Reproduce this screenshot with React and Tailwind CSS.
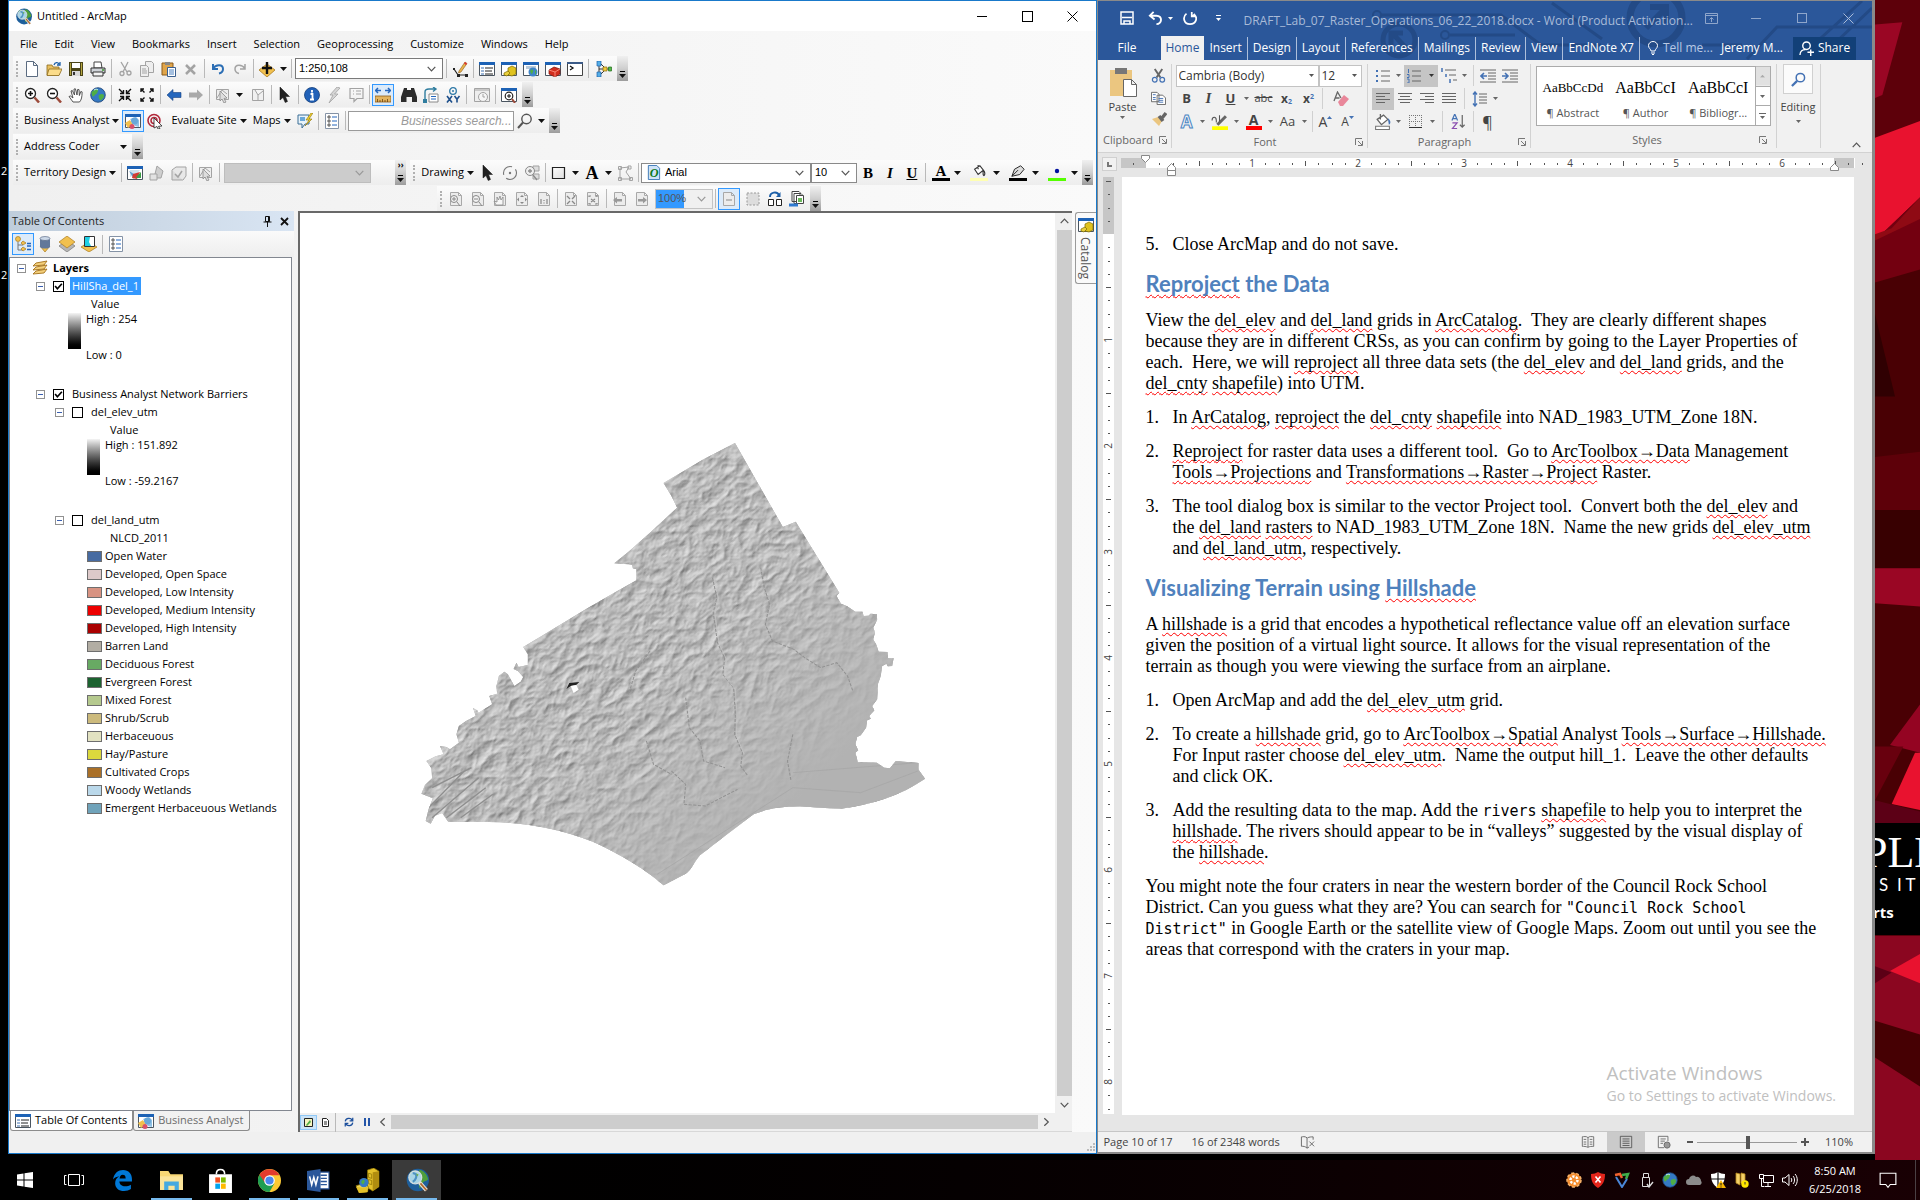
import React from "react";

/* ---------- drawing helpers ---------- */
function S({ w = 16, h, vb = "0 0 16 16", children }) {
  return (
    <svg width={w} height={h || w} viewBox={vb} fill="none" className="shrink-0" aria-hidden="true">
      {children}
    </svg>
  );
}

const Down = ({ c = "#111" }) => (
  <S w={7} h={4} vb="0 0 7 4"><path d="M0 0h7L3.5 4z" fill={c} /></S>
);
const Chevron = ({ c = "#555" }) => (
  <S w={9} h={6} vb="0 0 9 6"><path d="M.7.8l3.8 4 3.8-4" stroke={c} strokeWidth="1.2" /></S>
);

const win = (
  <>
    <path d="M.5 1.5h15v13H.5z" fill="#fff" stroke="#4a5560" />
    <path d="M0 1h16v3H0z" fill="#1d62b5" />
  </>
);
const page = (c = "#a8a8a8", f = "#ececec") => (
  <path d="M2.5 1.5h8l3 3v10h-11z M10.5 1.5v3h3" fill={f} stroke={c} />
);
const gl = "#a3a3a3";

const I = {
  new: <path d="M2.5.5h7l4 4v11h-11z M9.500 .5v4h4" fill="#fff" stroke="#5b6b80" />,
  open: (
    <>
      <path d="M1 4h5l1 2h6v8H1z" fill="#e8bf60" stroke="#8b6a1c" strokeWidth=".8" />
      <path d="M3 8h13l-3 6.500H1z" fill="#fbdc8a" stroke="#8b6a1c" strokeWidth=".8" />
      <path d="M8 4c1-3 4-3 5-1m1-2v3h-3" stroke="#1c5fa8" strokeWidth="1.300" />
    </>
  ),
  save: (
    <>
      <path d="M1 1h14v14H1z" fill="#4a4417" />
      <path d="M4 2h8v5H4z" fill="#fff" />
      <path d="M2 2h1v12H2zM13 2h1v12h-1z" fill="#b5a642" />
      <path d="M4 10h8v5H4z" fill="#d8d8d8" /><path d="M5 11h2v3H5z" fill="#333" />
    </>
  ),
  print: (
    <>
      <path d="M4 1h7l1 6H4z" fill="#fff" stroke="#444" />
      <path d="M1 7h14v5H1z" fill="#cfd3d8" stroke="#333" />
      <path d="M3 11h10v4H3z" fill="#f4f4f4" stroke="#333" />
      <path d="M12 9h2" stroke="#3a9a2a" strokeWidth="1.500" />
    </>
  ),
  cut: (
    <>
      <path d="M4 1l6 10M11 1L6 11" stroke={gl} strokeWidth="1.300" />
      <circle cx="5" cy="12.500" r="2" stroke={gl} strokeWidth="1.300" /><circle cx="12" cy="12" r="2" stroke={gl} strokeWidth="1.300" />
    </>
  ),
  copy: (
    <>
      <path d="M6.500.5h6l2 2v9h-8z" fill="#eee" stroke={gl} />
      <path d="M1.500 4.500h6l2 2v9h-8z M3 8h4M3 10h5M3 12h5" fill="#eee" stroke={gl} />
    </>
  ),
  paste: (
    <>
      <path d="M1 2h11v12H1z" fill="#e0a54a" stroke="#8a5a1a" /><path d="M4 1h5v3H4z" fill="#888" />
      <path d="M6.500 6.500h8v9h-8z" fill="#fff" stroke="#3a5f8f" /><path d="M8 9h5M8 11h5M8 13h5" stroke="#4a80c0" />
    </>
  ),
  x: <path d="M3 4l9 9M12 4l-9 9" stroke={gl} strokeWidth="2.500" />,
  undo: <path d="M3 3v5h5M3 7.500C6 3 13 3 13 8c0 3-2 4-4 4.500" stroke="#2d6fb5" strokeWidth="2" />,
  redo: <path d="M13 3v5H8M13 7.500C10 3 3 3 3 8c0 3 2 4 4 4.500" stroke={gl} strokeWidth="1.500" />,
  add: (
    <>
      <path d="M0 9l8-6 8 6-8 7z" fill="#f1c04e" stroke="#a97a20" strokeWidth=".8" />
      <path d="M8 1v12M3 7h10" stroke="#111" strokeWidth="2.400" />
    </>
  ),
  edit: (
    <>
      <path d="M2 8l4 6h9" stroke="#222" strokeWidth="1.200" /><path d="M1 7h2v2H1zM5 13h3v3H5zM13 13h3v3h-3z" fill="#222" />
      <path d="M7 10L13 1l2 1.500-6 8.500-2.500 1z" fill="#e9b44c" stroke="#8a5a1a" strokeWidth=".6" /><path d="M13 1l2 1.500-1 1.500-2-1.500z" fill="#d33" />
    </>
  ),
  toc: <>{win}<path d="M2 7h3M2 10h3M2 13h3" stroke="#3a6fb0" /><path d="M6 7h8M6 10h7M6 13h8" stroke="#222" /></>,
  catwin: <>{win}<path d="M7 7l4-2 4 2v6l-4 2-4-1z" fill="#dfc21e" stroke="#7d6800" strokeWidth=".7" /><path d="M3 12l4-2 2 2-3 3-3-1z" fill="#e8cf3c" stroke="#7d6800" strokeWidth=".7" /></>,
  searchwin: <>{win}<path d="M3 5h10v3H3z" fill="#b9c9d8" /><circle cx="10" cy="11" r="4.500" fill="#3f84c8" /><path d="M7 10c2-3 4-1 3 1s-2 3-2 1zM12 9c2 1 1 4 0 5z" fill="#4fae4a" /></>,
  toolbox: <>{win}<path d="M4 9l5-3 6 2v5l-5 3-6-3z" fill="#d22d1e" stroke="#7b120a" strokeWidth=".7" /><path d="M4 9l6 2 5-3M10 11v5" stroke="#ff9a88" strokeWidth=".8" /></>,
  python: <><path d="M.5 1.500h15v13H.5z" fill="#fff" stroke="#444" /><path d="M0 1h16v2H0z" fill="#3c5b88" /><path d="M3 5l3 2-3 2" stroke="#111" strokeWidth="1.300" /></>,
  model: (
    <>
      <path d="M3 3v10M3 8h6M5 3l4 4M5 13l4-4M11 8h3" stroke="#333" />
      <path d="M1 0h4v5H1zM1 11h4v5H1z" fill="#54aee8" stroke="#1c5fa8" strokeWidth=".7" /><path d="M7 6h4v4H7z" fill="#f0c93a" stroke="#8a6a10" strokeWidth=".7" /><path d="M12.500 6h3v4h-3z" fill="#54b948" stroke="#236b1a" strokeWidth=".7" />
    </>
  ),
  zin: <><circle cx="6.500" cy="6.500" r="5" fill="#fff" stroke="#222" strokeWidth="1.300" /><path d="M4 6.500h5M6.500 4v5" stroke="#111" strokeWidth="1.600" /><path d="M10.500 10.500l4.500 5" stroke="#9c4a3a" strokeWidth="2.500" /></>,
  zout: <><circle cx="6.500" cy="6.500" r="5" fill="#fff" stroke="#222" strokeWidth="1.300" /><path d="M4 6.500h5" stroke="#111" strokeWidth="1.600" /><path d="M10.500 10.500l4.500 5" stroke="#9c4a3a" strokeWidth="2.500" /></>,
  hand: <path d="M5 15L1 9.500l1.500-.5L5 11 3 4l1.300-.5L6.500 8 6 2l1.400-.2L9 8l.6-5.500 1.400.1.400 5.900 1.400-4 1.300.4c0 5-.6 8-2.600 10.100z" fill="#fff" stroke="#444" strokeWidth=".9" />,
  globe: <><circle cx="8" cy="8" r="7.300" fill="#3579c4" stroke="#1b3f6e" strokeWidth=".8" /><path d="M3 4c3-3 6-2 5 0s-1 3-2 3-3 5-4 1 0-3 1-4zM9 8c3-2 5-1 5 1s-3 5-4 4-2-4-1-5z" fill="#4fae46" /><path d="M4 3c2-1 3-1 4 0" stroke="#cdeeff" /></>,
  fin: <path d="M2 2l4 4M14 2l-4 4M2 14l4-4M14 14l-4-4M6.500 3v3.500H3M9.500 3v3.500H13M6.500 13V9.500H3M9.500 13V9.500H13" stroke="#111" strokeWidth="1.400" />,
  fout: <path d="M2 2l3.500 3.500M14 2l-3.500 3.500M2 14l3.500-3.500M14 14l-3.500-3.500M2 5V2h3M14 5V2h-3M2 11v3h3M14 11v3h-3" stroke="#111" strokeWidth="1.400" />,
  back: <path d="M1 8l6-5.500v3h8v5H7v3z" fill="#2466bd" stroke="#143f80" strokeWidth=".6" />,
  fwd: <path d="M15 8L9 2.500v3H1v5h8v3z" fill="#a9a9a9" />,
  sel: <><path d="M1.500 2.500h12v10h-12z" fill="#eee" stroke={gl} /><path d="M2 11l5-8 5 4" stroke={gl} /><path d="M5 4l7 7-3 .5 2 3.500-2 1-2-4-2 2z" fill="#ddd" stroke="#8a8a8a" strokeWidth=".8" /></>,
  clr: <path d="M2.500 2.500h11v11h-11zM5 3l3 5 5-4M8 8v5" fill="#f0f0f0" stroke={gl} />,
  ptr: <path d="M3 0l9.500 9.500H8.500l2 5-2.300 1-2.200-5L3 13z" fill="#222" stroke="#111" strokeWidth=".5" />,
  info: <><circle cx="8" cy="8" r="7.500" fill="#2161b8" stroke="#123d7b" strokeWidth=".8" /><path d="M8 3v2.500M6.500 7H8.500v5M6 12.500h4" stroke="#fff" strokeWidth="1.800" /></>,
  bolt: <path d="M11 0L4 8h3l-4 8 9-9H8.500L14 1z" fill="#d5d5d5" stroke={gl} strokeWidth=".8" />,
  html: <path d="M2 1.500h13v10H9l-3 3v-3H2zM5 4h1M8 4h5M5 7h1M8 7h5" stroke={gl} strokeWidth="1.200" />,
  measure: <><path d="M1 3.500h5M10 3.500h5M3 1L.5 3.500 3 6M13 1l2.500 2.500L13 6" stroke="#2466bd" strokeWidth="1.500" /><path d="M0 9h16v6H0z" fill="#e3b45f" stroke="#8a5a1a" strokeWidth=".8" /><path d="M2.500 12v3M5 13v2M7.500 12v3M10 13v2M12.500 12v3" stroke="#6a3f10" strokeWidth=".8" /></>,
  binoc: <path d="M3 1h3v2h4V1h3l3 9v5h-5v-5H5.500v5H0v-5z" fill="#2c2c2c" />,
  route: <><path d="M2 13V5c0-2 2-3 4-3h6M10 0l3 2-3 2.500" stroke="#2f7d9f" strokeWidth="1.400" /><path d="M6 7h9v8H6z" fill="#fff" stroke="#888" /><path d="M8 9.500h5M8 12h5" stroke="#2466bd" /><path d="M0 12h4v4H0z" fill="#2f7d9f" /></>,
  xy: <><circle cx="8" cy="4" r="3.300" stroke="#2f7aa8" strokeWidth="1.300" /><circle cx="8" cy="4" r="1" fill="#2f7aa8" /><path d="M2 9l5 6.500M7 9l-5 6.500M9.500 9l2.500 3.300L14.500 9M12 12v3.500" stroke="#1d4f8b" strokeWidth="1.600" /></>,
  clock: <><path d="M.5 1.500h15v13H.5zM1 3h14" fill="#eee" stroke={gl} /><circle cx="9" cy="10" r="4.500" fill="#f6f6f6" stroke={gl} /><path d="M9 7v3h2" stroke={gl} /></>,
  viewer: <>{win}<circle cx="8" cy="9" r="3.800" fill="#fff" stroke="#222" strokeWidth="1.200" /><path d="M6 9h4M8 7v4" stroke="#111" /><path d="M11 12l3 4" stroke="#9c4a3a" strokeWidth="2" /></>,
  bawin: <>{win}<path d="M5 6l6-2 3 3v7l-4-1z" fill="#8fc0e4" /><circle cx="9.500" cy="8" r="3.500" fill="#69a7d8" /><path d="M0 10l5-3 3 5-5 3z" fill="#f1c04e" /><circle cx="7" cy="13.500" r="2.500" fill="#d8506a" /></>,
  target: <><circle cx="7" cy="7.500" r="6" stroke="#b22a3c" strokeWidth="1.600" /><circle cx="7" cy="7.500" r="3" stroke="#b22a3c" strokeWidth="1.500" /><path d="M7 5l8 8-3.500.3 1.500 2.700h-2l-1-2.500L7 15z" fill="#fff" stroke="#222" strokeWidth=".8" /></>,
  mapnote: <><path d="M1 2h11v9H8l-3 4v-4H1z" fill="#e9f3fa" stroke="#3b6f96" /><path d="M3 4h5v4H3z" fill="#69a7d8" /><path d="M14 0L9 7h3l-4 6 7-7h-3l4-6z" fill="#f3d32c" stroke="#8a6f10" strokeWidth=".6" /></>,
  opts: <><path d="M1.500.5h13v15h-13z" fill="#fff" stroke="#8593a6" /><path d="M4 3h2v2H4zM4 7h2v2H4zM4 11h2v2H4z" stroke="#333" strokeWidth=".8" /><path d="M8 4h5M8 8h5M8 12h5" stroke="#2466bd" /></>,
  mag: <><circle cx="9.500" cy="6" r="4.700" stroke="#555" strokeWidth="1.400" /><path d="M6 9.500L1 15" stroke="#555" strokeWidth="2" /></>,
  tdwin: <>{win}<path d="M3 5h10l-3 4-7 3z" fill="#cfe0ee" /><path d="M2 6l5 3v5z" fill="#5c9bd0" /><path d="M6 9l7-2-3 7-5-1z" fill="#d33a34" /><path d="M10 11l4-4v6h-5z" fill="#3c9c46" /></>,
  gshape: <><path d="M8 1l6 5-2 7H5z" fill="#cfcfcf" stroke={gl} /><path d="M1 9h7v6H1z" fill="#e2e2e2" stroke={gl} /></>,
  gbox: <><path d="M1 5h11v10H1z" fill="#dcdcdc" stroke={gl} /><path d="M1 5l4-3h10v9l-3 4" fill="#e8e8e8" stroke={gl} /><path d="M4 9l3 3 4-6" stroke={gl} strokeWidth="1.500" /></>,
  rot: <><circle cx="8" cy="8" r="6.500" stroke="#777" strokeWidth="1.100" strokeDasharray="14 4" /><circle cx="8" cy="8" r="1.200" fill="#777" /></>,
  zsel: <><path d="M9 1h6v5H9zM9 9h6v5H9z" fill="#ddd" stroke={gl} /><circle cx="6" cy="6" r="4.500" fill="#eee" stroke="#8a8a8a" /><path d="M4 6h4M6 4v4M9 10l4 5" stroke="#8a8a8a" strokeWidth="1.300" /></>,
  rect: <path d="M1.500 2.500h12v11h-12z" fill="url(#rg)" stroke="#222" strokeWidth="1.200" />,
  nodes: <path d="M3 3l9-1-3 5 5 7H3zM1.500 1.500h3v3h-3zM11 1h3v3h-3zM1.500 12.500h3v3h-3zM12.500 12.500h3v3h-3z" stroke={gl} />,
  font0: <><path d="M2.500.5h9l3 3v12h-12z" fill="#cfe3f7" stroke="#3b78b5" /><text x="4" y="13" fontFamily="Liberation Serif" fontStyle="italic" fontWeight="700" fontSize="13" fill="#0b7a1c">O</text></>,
  pgzin: <>{page()}<circle cx="6" cy="8" r="3.500" fill="#f3f3f3" stroke="#888" /><path d="M4 8h4M6 6v4M9 11l3 4" stroke="#888" /></>,
  pgzout: <>{page()}<circle cx="6" cy="8" r="3.500" fill="#f3f3f3" stroke="#888" /><path d="M4 8h4M9 11l3 4" stroke="#888" /></>,
  pgpan: <>{page()}<path d="M4 14l-2-4 3 1V6l1.500 3L8 5l1 4 2-3v8z" fill="#f7f7f7" stroke="#888" strokeWidth=".8" /></>,
  pgfull: <>{page()}<path d="M8 4l2 2H6zM8 13l2-2H6zM3 8.500l2-2v4zM13 8.500l-2-2v4z" fill="#888" /></>,
  pg11: <>{page()}<path d="M5 8v5M11 8v5M8 9v1M8 11.500v1" stroke="#888" strokeWidth="1.200" /></>,
  pgin: <>{page()}<path d="M4 5l3 3M12 5L9 8M4 13l3-3M12 13l-3-3" stroke="#888" strokeWidth="1.300" /></>,
  pgout: <>{page()}<path d="M4 6V5h2M12 6V5h-2M4 12v1h2M12 12v1h-2M6 8l4 3M10 8l-4 3" stroke="#888" strokeWidth="1.200" /></>,
  pgback: <>{page()}<path d="M1 9l4-3v2h5v2.500H5v2z" fill="#999" /></>,
  pgfwd: <>{page()}<path d="M13 9L9 6v2H4v2.500h5v2z" fill="#999" /></>,
  pgline: <>{page()}<path d="M5 9h6" stroke="#888" /></>,
  pgdash: <path d="M2 2h12v12H2z" fill="#ddd" stroke="#999" strokeDasharray="2 1.500" />,
  swap: <><path d="M3 6c0-5 7-6 9-2" stroke="#1c5fa8" strokeWidth="2" /><path d="M13.500 1v5H9z" fill="#1c5fa8" /><path d="M1.500 8.500h5v6h-5zM9.500 8.500h5v6h-5z" fill="#fff" stroke="#222" /></>,
  pgs: <><path d="M3 .5h7l1 1v9H3zM5 2.500h7l1 1v9H5z" fill="#fff" stroke="#444" /><path d="M7.500 4.500h7v8h-7z" fill="#fff" stroke="#444" /><path d="M9 7h4v4H9z" fill="#69b95a" /><path d="M0 12.500h9v3H0z" fill="#2f7ad0" /></>,
  tree: <><circle cx="3" cy="3" r="2.500" fill="#f1c04e" stroke="#a97a20" strokeWidth=".7" /><path d="M3 6v8h5M3 9h5" stroke="#777" /><path d="M8 5l3 2-3 2-2-2zM8 11l3 2-3 2-2-2z" fill="#f1c04e" stroke="#a97a20" strokeWidth=".7" /><path d="M12 7.500h4M12 10h4M12 13.500h4" stroke="#2466bd" strokeWidth="1.300" /></>,
  db: <><path d="M3 10l5 6 5-6z" fill="#f1c04e" stroke="#a97a20" strokeWidth=".7" /><path d="M3 2h10v9c-2 2-8 2-10 0z" fill="#62789a" /><ellipse cx="8" cy="2.500" rx="5" ry="2" fill="#cdd9e8" stroke="#4a5b78" strokeWidth=".6" /></>,
  layersv: <><path d="M0 10l8-6 8 6-8 6z" fill="#b5b5b5" stroke="#777" strokeWidth=".7" /><path d="M0 6l8-6 8 6-8 6z" fill="#f1c04e" stroke="#a97a20" strokeWidth=".7" /></>,
  laysel: <><path d="M0 11l8-5 8 5-8 5z" fill="#f1c04e" stroke="#a97a20" strokeWidth=".7" /><path d="M3.500.5h10v10h-10z" fill="#fff" stroke="#333" /><path d="M4 1h5l-1 5 2 4H4z" fill="#1fd0e6" /></>,
  layers: <path d="M4 3l11-2-3 4L1 6zM4 7l11-2-3 4-11 1zM4 11l11-2-3 4-11 1z" fill="#f3cf7b" stroke="#a4701a" strokeWidth=".9" />,
};

const ArcGlobe = ({ w = 18 }) => (
  <S w={w} vb="0 0 28 28">
    <circle cx="15" cy="14" r="13" fill="#1e5f9c" />
    <path d="M17 2c5 1 9 6 10 11-2 3-4 1-6 4s-2 6-4 7l-1-6 4-5-5-4zM6 5l5-2 1 3-7 6z" fill="#4f9e3c" />
    <circle cx="12" cy="11" r="7.500" fill="#a9d5e6" stroke="#d3dde0" strokeWidth="1.500" />
    <path d="M9 6c3 0 5 2 4 5s-1 4-4 5" stroke="#4f93c2" strokeWidth="2.500" /><path d="M13 6l3 2-2 2" fill="#6fb04a" />
    <path d="M17 17l8 9" stroke="#e8e1d8" strokeWidth="4.500" /><path d="M18 18l7 8" stroke="#b0682c" strokeWidth="2" />
  </S>
);

/* ---------- ArcMap tool bar parts ---------- */
const Tool = ({ n, label, on }) => (
  <button
    aria-label={label || n}
    className={on ? "flex h-[22px] w-[22px] items-center justify-center border border-[#3399ff] bg-[#dcebfa]" : "flex h-[22px] w-[22px] items-center justify-center"}
  >
    <S>{I[n]}</S>
  </button>
);
const DD = ({ label = "Show menu" }) => (
  <button aria-label={label} className="flex h-[22px] w-[11px] items-center justify-center"><Down /></button>
);
const Sep = () => <span className="mx-[2px] h-[19px] w-px bg-[#b9b9b9]" />;
const Grip = () => <span className="mx-[3px] h-4 border-l-2 border-dotted border-[#b0b0b0]" />;
const Over = ({ more }) => (
  <button aria-label="Toolbar options" className="ml-[2px] flex h-[25px] w-[11px] flex-col items-center justify-end gap-[2px] bg-linear-to-b from-[#f0f0f0] via-[#cfcfcf] to-[#9c9c9c] pb-[3px]">
    {more && <span className="mb-auto text-[8px] leading-[10px] font-bold">››</span>}
    <span className="h-px w-[5px] bg-black" />
    <Down />
  </button>
);
const Bar = ({ label, children }) => (
  <div role="toolbar" aria-label={label} className="flex h-[25px] items-center bg-linear-to-b from-[#fcfcfc] to-[#ededed]">
    <Grip />
    {children}
  </div>
);
const Row = ({ children }) => <div className="flex items-start pl-1">{children}</div>;
const MenuBtn = ({ children }) => (
  <button className="flex h-[22px] items-center gap-[3px] px-[3px] whitespace-nowrap">{children}<Down /></button>
);
const Combo = ({ label, value, box, sel, chev }) => (
  <span className={"relative flex items-center " + box}>
    <select aria-label={label} defaultValue={value} className={"h-full w-full appearance-none bg-transparent outline-none " + sel}>
      <option>{value}</option>
    </select>
    <span className="pointer-events-none absolute right-[6px]"><Chevron c={chev} /></span>
  </span>
);
const Letter = ({ ch, cls, line }) => (
  <button aria-label={"Format " + ch} className="flex h-[22px] w-[22px] flex-col items-center justify-center font-[Liberation_Serif] text-[15px] leading-[14px] font-bold">
    <span className={cls}>{ch}</span>
    {line}
  </button>
);

function ArcToolbars() {
  return (
    <div className="flex h-[155px] shrink-0 flex-col justify-between">
      <Row>
        <Bar label="Standard">
          <Tool n="new" /><Tool n="open" /><Tool n="save" /><Tool n="print" /><Sep />
          <Tool n="cut" /><Tool n="copy" /><Tool n="paste" /><Tool n="x" label="Delete" /><Sep />
          <Tool n="undo" /><Tool n="redo" /><Sep /><Tool n="add" label="Add data" /><DD /><Sep />
          <Combo label="Map scale" value="1:250,108" box="mx-px h-[21px] w-[148px] border border-[#7a7a7a] bg-white" sel="pl-[3px] font-[Liberation_Sans] text-[11px]" />
          <Sep /><Tool n="edit" /><Sep />
          <Tool n="toc" label="Table of contents" /><Tool n="catwin" label="Catalog" /><Tool n="searchwin" label="Search" /><Tool n="toolbox" /><Tool n="python" /><Sep />
          <span className="w-[2px]" /><Tool n="model" label="Model builder" /><Over />
        </Bar>
      </Row>
      <Row>
        <Bar label="Tools">
          <Tool n="zin" label="Zoom in" /><Tool n="zout" label="Zoom out" /><Tool n="hand" label="Pan" /><Tool n="globe" label="Full extent" /><Sep />
          <Tool n="fin" label="Fixed zoom in" /><Tool n="fout" label="Fixed zoom out" /><Sep /><Tool n="back" /><Tool n="fwd" label="Forward" /><Sep />
          <Tool n="sel" label="Select features" /><DD /><span className="w-[2px]" /><Tool n="clr" label="Clear selection" /><Sep /><Tool n="ptr" label="Select elements" /><Sep />
          <Tool n="info" label="Identify" /><Tool n="bolt" label="Hyperlink" /><Tool n="html" label="HTML popup" /><Sep />
          <Tool n="measure" on /><span className="w-1" /><Tool n="binoc" label="Find" /><Tool n="route" label="Find route" /><Tool n="xy" label="Go to XY" /><Sep />
          <span className="w-[2px]" /><Tool n="clock" label="Time slider" /><Sep /><Tool n="viewer" label="Viewer window" /><Over />
        </Bar>
      </Row>
      <Row>
        <Bar label="Business Analyst">
          <MenuBtn>Business Analyst</MenuBtn><Tool n="bawin" label="Business Analyst window" on /><Tool n="target" />
          <span className="w-[2px]" /><MenuBtn>Evaluate Site</MenuBtn><MenuBtn>Maps</MenuBtn><Tool n="mapnote" label="Map note" /><Sep /><Tool n="opts" label="Options" /><Sep />
          <input aria-label="Businesses search" placeholder="Businesses search..." className="h-5 w-[166px] border border-[#9a9a9a] bg-white px-px text-right font-[Liberation_Sans] text-[12px] italic placeholder:text-[#9a9a9a]" />
          <Tool n="mag" label="Search" /><DD /><Over />
        </Bar>
      </Row>
      <Row>
        <Bar label="Address Coder">
          <button className="flex h-[22px] w-[109px] items-center justify-between px-[3px]">Address Coder<Down /></button><Over />
        </Bar>
      </Row>
      <Row>
        <Bar label="Territory Design">
          <MenuBtn>Territory Design</MenuBtn><Sep /><Tool n="tdwin" label="Territory window" /><Tool n="gshape" label="Territory shape" /><Tool n="gbox" label="Territory check" /><Sep />
          <Tool n="sel" label="Select territory" /><Sep />
          <span className="w-[2px]" />
          <Combo label="Territory level" value="" box="h-5 w-[147px] border border-[#bdbdbd] bg-[#cccccc]" sel="" chev="#999" />
          <span className="w-[22px]" /><Over more />
        </Bar>
        <span className="w-1" />
        <Bar label="Drawing">
          <MenuBtn>Drawing</MenuBtn><Tool n="ptr" label="Select elements" /><Tool n="rot" label="Rotate" /><Tool n="zsel" label="Zoom to selected" /><Sep />
          <Tool n="rect" label="Rectangle" /><DD /><Letter ch="A" cls="text-[18px]" /><DD /><Tool n="nodes" label="Edit vertices" /><Sep />
          <span className="flex h-5 w-[170px] items-center border border-[#8a8a8a] bg-white pl-1">
            <S w={15}>{I.font0}</S>
            <Combo label="Font" value="Arial" box="h-full flex-1" sel="pl-1 font-[Liberation_Sans] text-[11px]" />
          </span>
          <Combo label="Font size" value="10" box="h-5 w-[46px] border border-[#8a8a8a] bg-white" sel="pl-[3px] font-[Liberation_Sans] text-[11px]" />
          <Letter ch="B" /><Letter ch="I" cls="italic" /><Letter ch="U" cls="underline" /><Sep />
          <span className="w-[2px]" />
          <Letter ch="A" line={<span className="h-[3px] w-[18px] bg-black" />} /><DD />
          <span className="w-1" />
          <button aria-label="Fill color" className="flex h-[22px] w-6 flex-col items-center justify-center"><S w={14}><path d="M3 6l6-4 4 5-6 5zM13 7c2 2 2 5 1 6s-2-2-1-6zM7 1v5" fill="#fff" stroke="#333" strokeWidth="1.300" /></S><span className="h-[3px] w-[18px] bg-[#ffffb3]" /></button><DD />
          <span className="w-1" />
          <button aria-label="Line color" className="flex h-[22px] w-6 flex-col items-center justify-center"><S w={14}><path d="M1 14l3-8 7-4 4 4-5 6zM1 14l7-7" fill="#ddd" stroke="#222" strokeWidth="1.100" /></S><span className="h-[3px] w-[18px] bg-black" /></button><DD />
          <span className="w-1" />
          <button aria-label="Marker color" className="flex h-[22px] w-6 flex-col items-center justify-center"><S w={14}><circle cx="8" cy="8" r="2.500" fill="#0010a0" /></S><span className="h-[3px] w-[18px] bg-[#55ff00]" /></button><DD /><Over />
        </Bar>
      </Row>
      <Row>
        <span className="w-[424px]" />
        <Bar label="Layout">
          <Tool n="pgzin" /><Tool n="pgzout" /><Tool n="pgpan" /><Tool n="pgfull" /><Tool n="pg11" /><Sep /><Tool n="pgin" /><Tool n="pgout" /><Sep /><Tool n="pgback" /><Tool n="pgfwd" />
          <Combo label="Layout zoom" value="100%" box="ml-[2px] h-5 w-[58px] border border-[#c4c4c4] bg-white" sel="pl-[2px] font-[Liberation_Sans] text-[11px] text-[#555] bg-linear-to-r from-[#3399ff] from-[28px] to-[#f0f0f0] to-[28px]" chev="#999" />
          <Sep /><Tool n="pgline" on /><span className="w-[2px]" /><Tool n="pgdash" /><Tool n="swap" /><Tool n="pgs" /><Over />
        </Bar>
      </Row>
    </div>
  );
}

/* ---------- table of contents ---------- */
const Minus = () => (
  <button aria-label="Collapse" className="flex h-[9px] w-[9px] shrink-0 items-center justify-center border border-[#919191] bg-white"><span className="h-px w-[5px] bg-[#3a5fb0]" /></button>
);
const Check = ({ id, on }) => (
  <span className="relative flex h-[11px] w-[11px] shrink-0">
    <input id={id} type="checkbox" defaultChecked={on} className="h-full w-full appearance-none border border-black bg-white" />
    {on && <span className="pointer-events-none absolute inset-0 flex items-center justify-center"><S w={9}><path d="M2 7l4 5 8-9" stroke="#000" strokeWidth="3" /></S></span>}
  </span>
);
const Ramp = ({ pad, hi, lo }) => (
  <div className={"flex h-[72px] gap-[5px] " + pad}>
    <span className="h-9 w-[13px] bg-linear-to-b from-[#f4f4f4] to-black" />
    <span className="flex h-12 flex-col justify-between leading-3"><span>{hi}</span><span>{lo}</span></span>
  </div>
);
const LAND = [
  ["Open Water", "bg-[#476ba1]"], ["Developed, Open Space", "bg-[#ddc9c9]"], ["Developed, Low Intensity", "bg-[#d89382]"],
  ["Developed, Medium Intensity", "bg-[#ed0000]"], ["Developed, High Intensity", "bg-[#aa0000]"], ["Barren Land", "bg-[#b2ada3]"],
  ["Deciduous Forest", "bg-[#68aa63]"], ["Evergreen Forest", "bg-[#1c6330]"], ["Mixed Forest", "bg-[#b5c98e]"],
  ["Shrub/Scrub", "bg-[#ccba7c]"], ["Herbaceuous", "bg-[#e2e2c1]"], ["Hay/Pasture", "bg-[#dbd83d]"],
  ["Cultivated Crops", "bg-[#aa7028]"], ["Woody Wetlands", "bg-[#bad8ea]"], ["Emergent Herbaceuous Wetlands", "bg-[#70a3ba]"],
];

function Toc() {
  return (
    <aside className="flex w-[285px] shrink-0 flex-col whitespace-nowrap">
      <div className="flex h-5 shrink-0 items-center bg-linear-to-r from-[#bfcddb] to-[#d9e5f3] pl-[3px] text-[#1f1f1f]">
        <h2 className="flex-1">Table Of Contents</h2>
        <button aria-label="Pin" className="px-1"><S w={9} h={11} vb="0 0 9 11"><path d="M2.500.5h4v5h-4zM5.500 1v4M.5 6h8M4.500 6v5" stroke="#111" /></S></button>
        <button aria-label="Close panel" className="pr-[5px] pl-1"><S w={9} vb="0 0 9 9"><path d="M1 1l7 7M8 1L1 8" stroke="#111" strokeWidth="1.800" /></S></button>
      </div>
      <div className="flex h-[26px] shrink-0 items-center bg-linear-to-b from-[#fafafa] to-[#eeeeee] pl-[3px]">
        <Tool n="tree" label="List by drawing order" on /><Tool n="db" label="List by source" /><Tool n="layersv" label="List by visibility" /><Tool n="laysel" label="List by selection" /><Sep /><Tool n="opts" label="Options" />
      </div>
      <div className="mr-[2px] flex-1 border border-[#828790] bg-white pt-px leading-[18px]">
        <div className="flex h-[18px] items-center pl-[7px] font-bold"><Minus /><span className="mr-[5px] ml-[6px]"><S>{I.layers}</S></span>Layers</div>
        <div className="flex h-[18px] items-center pl-[26px]"><Minus /><span className="w-2" /><Check id="hs" on /><label htmlFor="hs" className="ml-[6px] bg-[#3399ff] px-[2px] text-white">HillSha_del_1</label></div>
        <p className="h-[18px] pl-[81px]">Value</p>
        <Ramp pad="pl-[58px]" hi="High : 254" lo="Low : 0" />
        <div className="flex h-[18px] items-center pl-[26px]"><Minus /><span className="w-2" /><Check id="ba" on /><label htmlFor="ba" className="ml-2">Business Analyst Network Barriers</label></div>
        <div className="flex h-[18px] items-center pl-[45px]"><Minus /><span className="w-2" /><Check id="el" /><label htmlFor="el" className="ml-2">del_elev_utm</label></div>
        <p className="h-[18px] pl-[100px]">Value</p>
        <Ramp pad="pl-[77px]" hi="High : 151.892" lo="Low : -59.2167" />
        <div className="flex h-[18px] items-center pl-[45px]"><Minus /><span className="w-2" /><Check id="ld" /><label htmlFor="ld" className="ml-2">del_land_utm</label></div>
        <p className="h-[18px] pl-[100px]">NLCD_2011</p>
        <ul>
          {LAND.map(([t, c]) => (
            <li key={t} className="flex h-[18px] items-center gap-[3px] pl-[77px]"><span className={"h-[11px] w-[15px] border border-[#6e6e6e] " + c} />{t}</li>
          ))}
        </ul>
      </div>
      <div role="tablist" className="flex h-[21px] shrink-0 items-start pl-px">
        <button role="tab" aria-selected="true" className="flex h-5 items-center gap-1 rounded-b-[3px] border border-t-0 border-[#8c8c8c] bg-white pr-[5px] pl-1"><S>{I.toc}</S>Table Of Contents</button>
        <button role="tab" aria-selected="false" className="flex h-5 items-center gap-1 rounded-b-[3px] border border-t-0 border-[#8c8c8c] pr-[5px] pl-1 text-[#6d6d6d]"><S>{I.bawin}</S>Business Analyst</button>
      </div>
    </aside>
  );
}

/* ---------- hillshade map ---------- */
const OUTLINE =
  "M938 66L1072 318L1108 302L1230 515L1222 525L1235 548L1252 556L1275 572L1295 572L1298 585L1312 584L1318 578L1335 580L1336 596L1325 620L1330 634L1325 655L1334 672L1340 692L1365 693L1366 712L1382 712L1378 735L1366 736L1362 728L1350 735L1346 765L1338 790L1336 835L1322 855L1328 868L1314 885L1318 893L1308 898L1305 920L1290 943L1280 948L1275 970L1283 988L1275 995L1282 1024L1335 1025L1356 1040L1372 1042L1388 1020L1452 1026L1452 1046L1470 1073C1400 1125 1320 1150 1235 1163L1175 1160C1090 1152 1040 1158 990 1180C950 1212 890 1262 840 1303C822 1325 815 1350 800 1358L738 1393C700 1355 620 1300 540 1262C440 1222 350 1205 250 1203L135 1202L118 1176L98 1184L86 1208L72 1200L80 1165L92 1132L60 1118L70 1092L90 1072L88 1042L74 1020L100 1006L122 1000L112 975L130 978L140 985L165 965L158 940L165 915L185 900L212 885L205 862L216 868L220 875L240 862L258 850L250 825L272 818L270 795L277 765L292 752L302 760L320 795L338 782L345 768L330 750L318 744L326 725L332 738L358 732L358 700L345 678L400 643L520 565L600 515L662 478L662 445L652 442L650 432L640 430L600 427L640 392L700 335L776 260L760 225L738 186L850 115Z";

function Hillshade() {
  return (
    <svg width="560" height="480" viewBox="0 0 560 480" role="img" aria-label="Hillshade of the county">
      <defs>
        <clipPath id="county"><path d={OUTLINE} transform="scale(.35714 .33333)" /></clipPath>
        <filter id="relief" x="0" y="0" width="100%" height="100%" colorInterpolationFilters="sRGB">
          <feTurbulence type="turbulence" baseFrequency="0.05 0.065" numOctaves="4" seed="8" />
          <feDiffuseLighting surfaceScale="-1.4" diffuseConstant="1.03" lightingColor="#ffffff">
            <feDistantLight azimuth="262" elevation="45" />
          </feDiffuseLighting>
        </filter>
        <linearGradient id="plain" gradientUnits="userSpaceOnUse" x1="150" y1="180" x2="380" y2="420">
          <stop offset="0" stopColor="#bababa" stopOpacity=".3" />
          <stop offset=".4" stopColor="#b9b9b9" stopOpacity=".35" />
          <stop offset=".65" stopColor="#b6b6b6" stopOpacity=".65" />
          <stop offset=".95" stopColor="#b2b2b2" stopOpacity="1" />
        </linearGradient>
      </defs>
      <g clipPath="url(#county)" shapeRendering="crispEdges">
        <rect width="560" height="480" fill="#b6b6b6" />
        <g transform="rotate(-38 280 240)"><rect x="-120" y="-160" width="800" height="800" filter="url(#relief)" /></g>
        <rect width="560" height="480" fill="url(#plain)" />
        <g transform="scale(.35714 .33333)" fill="none" shapeRendering="auto">
          <path d="M875 470l12 60-10 45 12 90 20 45-5 50 30 40 5 80-2 60 22 55-5 40 20 30M1010 440l10 60 15 50-12 60 20 50 60 25 30 25 45 30 45-15 30 40 15 45M700 690l-40 60-20 70M1100 940l-15 80 10 60M800 830l10 90 30 40 10 60 60 20M760 1050l40 40-5 60 60 5 90-50M690 960l20 70 50 30" stroke="#929292" strokeWidth="3" strokeDasharray="9 4" />
          <path d="M880 475l12 60-10 45 12 90 20 45-5 50 30 40 5 80-2 60 22 55" stroke="#c6c6c6" strokeWidth="2" /><path d="M1100 1100l-380 260M1100 1100l190 15 160-65M1100 1055l350-30" stroke="#a4a4a4" strokeWidth="2" />
          <path d="M80 1160l100-110M90 1190l130-120M130 1190l110-90M90 1100l110-60M170 1190l90-70" stroke="#8f8f8f" strokeWidth="4" />
          <path d="M466 804l8-18 28-3-8 8-16 4z" fill="#222" /><path d="M478 795l16-3 6 14-14 10z" fill="#fff" />
        </g>
      </g>
    </svg>
  );
}

function ArcMap() {
  return (
    <section aria-label="ArcMap" className="flex min-w-0 flex-[1090] flex-col overflow-hidden border border-[#1979ca] bg-linear-to-r from-[#f0f0f0] to-[#fafafa] text-[11px] text-black">
      <header className="flex h-[30px] shrink-0 items-center bg-white pl-[6px]">
        <ArcGlobe w={17} />
        <h1 className="ml-[5px] flex-1">Untitled - ArcMap</h1>
        <button aria-label="Minimize" className="flex w-[45px] justify-center"><span className="h-px w-[10px] bg-black" /></button>
        <button aria-label="Maximize" className="flex w-[45px] justify-center"><span className="h-[11px] w-[11px] border border-black" /></button>
        <button aria-label="Close" className="flex w-[46px] justify-center"><S w={11} vb="0 0 11 11"><path d="M.5.5l10 10M10.500.5l-10 10" stroke="#000" /></S></button>
      </header>
      <nav className="flex h-[25px] shrink-0 items-center gap-[17px] pt-[2px] pl-[11px]">
        {["File", "Edit", "View", "Bookmarks", "Insert", "Selection", "Geoprocessing", "Customize", "Windows", "Help"].map((t) => <button key={t}>{t}</button>)}
      </nav>
      <ArcToolbars />
      <div className="flex min-h-0 flex-1">
        <Toc />
        <div className="ml-1 flex min-w-0 flex-1 flex-col border-t-2 border-l-2 border-[#696969] bg-[#f0f0f0]">
          <div className="flex min-h-0 flex-1">
            <div className="flex min-w-0 flex-1 items-center justify-center bg-white pb-1 pl-[5px]"><Hillshade /></div>
            <div className="ml-[2px] flex w-[15px] flex-col items-center">
              <button aria-label="Scroll up" className="flex h-[17px] rotate-180 items-center"><Chevron /></button>
              <span className="w-full flex-1 bg-[#cdcdcd]" />
              <button aria-label="Scroll down" className="flex h-[17px] items-center"><Chevron /></button>
            </div>
          </div>
          <div className="flex h-[19px] shrink-0 items-center border-b border-[#d8d8d8]">
            <button aria-label="Data view" className="flex h-[15px] w-[17px] items-center justify-center border border-[#90c8f6] bg-[#cce4f7]"><S w={9} vb="0 0 9 9"><path d="M.5.5h8v8h-8z" fill="#f7f3c0" stroke="#222" /><path d="M2 7l4-5 1 2-4 4z" fill="#4fae46" /></S></button>
            <button aria-label="Layout view" className="flex w-4 justify-center"><S w={9} vb="0 0 9 9"><path d="M1.500.5h4l2 2v6h-6zM3 4h3M3 6h3" fill="#fff" stroke="#222" /></S></button>
            <Sep />
            <button aria-label="Refresh" className="flex w-[22px] justify-center"><S w={10}><path d="M2 7c1-6 9-6 11-2M14 1v5H9M14 9c-1 6-9 6-11 2M2 15v-5h5" stroke="#1c4f9c" strokeWidth="2" /></S></button>
            <button aria-label="Pause drawing" className="flex w-3 gap-[2px] pl-1"><span className="h-2 w-[2px] bg-[#2455a8]" /><span className="h-2 w-[2px] bg-[#2455a8]" /></button>
            <button aria-label="Scroll left" className="ml-[2px] flex w-[17px] rotate-90 justify-center"><Chevron /></button>
            <span className="h-[14px] flex-1 bg-[#cdcdcd]" />
            <button aria-label="Scroll right" className="mr-[17px] flex w-[17px] -rotate-90 justify-center"><Chevron /></button>
          </div>
        </div>
        <div className="w-6 shrink-0 pt-px pl-[3px]">
          <button className="flex h-[72px] w-full flex-col items-center gap-1 rounded-l-[3px] border border-r-0 border-[#9a9a9a] pt-1 text-[12px] text-[#555]"><S>{I.catwin}</S><span className="leading-[13px] [writing-mode:vertical-rl]">Catalog</span></button>
        </div>
      </div>
      <footer className="flex h-[21px] shrink-0 items-end justify-end bg-[#f0f0f0] p-px"><S w={10} vb="0 0 10 10"><path d="M8 2h2M8 5h2M5 5h2M8 8h2M5 8h2M2 8h2" stroke="#bbb" strokeWidth="2" /></S></footer>
    </section>
  );
}

/* ---------- Word ---------- */
const WB = ({ label, w = "w-[22px]", on, children }) => (
  <button aria-label={label} className={"flex h-[22px] items-center justify-center " + w + (on ? " bg-[#c5c5c5]" : "")}>{children}</button>
);
const WD = () => <button aria-label="More" className="flex h-[22px] w-[10px] items-center justify-center"><S w={5} h={3} vb="0 0 7 4"><path d="M0 0h7L3.500 4z" fill="#666" /></S></button>;
const WSep = ({ m = "mx-[2px]" }) => <span className={"h-[21px] w-px bg-[#d0d0d0] " + m} />;
const Lines = ({ d }) => <S w={14} vb="0 0 14 14"><path d={d} stroke="#666" /></S>;
const Launcher = () => <button aria-label="Dialog launcher"><S w={8} vb="0 0 8 8"><path d="M.5 7V.5H7M3 3l4 4M7.500 3v4.500H3" stroke="#777" /></S></button>;
const Group = ({ name, w, launch, children }) => (
  <div className={"mt-1 flex h-[84px] flex-col border-r border-[#d2d2d2] " + w}>
    <div className="h-[72px]">{children}</div>
    <div className="flex flex-1 items-center pt-px pr-1 text-[#666]"><span className="flex-1 text-center">{name}</span>{launch && <Launcher />}</div>
  </div>
);
const WRow = ({ children }) => <div className="flex h-[23px] items-center">{children}</div>;
const WSelect = ({ label, value, w }) => (
  <span className={"relative flex h-[22px] items-center border border-[#c3c3c3] bg-white " + w}>
    <select aria-label={label} defaultValue={value} className="h-full w-full appearance-none bg-transparent pl-[2px] text-[12px] text-[#333] outline-none"><option>{value}</option></select>
    <span className="pointer-events-none absolute right-1"><S w={5} h={3} vb="0 0 7 4"><path d="M0 0h7L3.500 4z" fill="#555" /></S></span>
  </span>
);
const Style = ({ sample, name, size }) => (
  <button className="flex flex-1 flex-col items-center overflow-hidden pt-[9px] whitespace-nowrap"><span className={"h-6 font-[Liberation_Serif] leading-6 text-black " + size}>{sample}</span><span className="mt-[5px] text-[#555]">{name}</span></button>
);

function WordHeader() {
  const tabs = ["Insert", "Design", "Layout", "References", "Mailings", "Review", "View", "EndNote X7"];
  return (
    <header className="relative flex h-[59px] shrink-0 flex-col overflow-hidden bg-[#2b579a] text-white">
      <svg className="absolute inset-y-0 right-0" width="520" height="59" viewBox="0 0 520 59" fill="none" stroke="#234a86" strokeWidth="5" aria-hidden="true">
        <circle cx="47" cy="39" r="16" /><path d="M40 32l15 16M39 44V32h12" /><circle cx="25" cy="14" r="4" strokeWidth="2" /><path d="M29 14h120l40 30h60M98 34h65M200 2l50 36" strokeWidth="3" />
        <circle cx="93" cy="34" r="4" strokeWidth="2" /><circle cx="304" cy="17" r="26" strokeWidth="7" /><path d="M294 27l20-20M298 6h16v16" strokeWidth="6" /><path d="M395 58l30-32h95M460 45l50-45M480 45l40-38M350 44h40" strokeWidth="3" />
      </svg>
      <div className="relative flex h-[34px] items-center">
        <button aria-label="Save" className="ml-[22px]"><S w={14} vb="0 0 14 14"><path d="M1 1h12v12H1z" stroke="#fff" strokeWidth="1.500" /><path d="M2 6.500h10M4 13v-3h6v3" stroke="#fff" strokeWidth="1.500" /></S></button>
        <button aria-label="Undo" className="ml-[14px]"><S w={15}><path d="M6 1L2 5l5 4M2 5h7c7 0 6 9 0 9" stroke="#fff" strokeWidth="2" /></S></button>
        <span className="ml-[5px]"><S w={5} h={3} vb="0 0 7 4"><path d="M0 0h7L3.500 4z" fill="#fff" /></S></span>
        <button aria-label="Repeat" className="ml-[10px]"><S w={14}><path d="M10 1v5h5M4 3c-5 4-3 12 4 12s9-7 5-11l-2 2" stroke="#fff" strokeWidth="2" /></S></button>
        <button aria-label="Customize" className="ml-[19px] flex flex-col items-center gap-[2px]"><span className="h-px w-[5px] bg-white" /><S w={5} h={3} vb="0 0 7 4"><path d="M0 0h7L3.500 4z" fill="#fff" /></S></button>
        <h2 className="mt-[6px] ml-[23px] min-w-0 flex-1 text-[12px] whitespace-nowrap text-[#a9bbd8]">DRAFT_Lab_07_Raster_Operations_06_22_2018.docx - Word (Product Activation...</h2>
        <button aria-label="Ribbon options" className="mr-[33px]"><S w={13} h={11} vb="0 0 13 11"><path d="M.5.5h12v10H.5zM1 2.500h12M6.500 9V5M4.500 6.500l2-2 2 2" stroke="#8fa6cb" /></S></button>
        <button aria-label="Minimize Word" className="mr-9 h-px w-[10px] bg-[#8fa6cb]" />
        <button aria-label="Maximize Word" className="mr-9 h-[10px] w-[10px] border border-[#8fa6cb]" />
        <button aria-label="Close Word" className="mr-[18px]"><S w={11} vb="0 0 11 11"><path d="M.5.5l10 10M10.500.5l-10 10" stroke="#a9bbd8" /></S></button>
      </div>
      <div role="tablist" className="relative mt-px flex h-6 items-center text-[12px] whitespace-nowrap">
        <button role="tab" className="w-[63px] pr-1">File</button>
        <button role="tab" aria-selected="true" className="h-full bg-[#f1f1f1] px-[5px] text-[#2b579a]">Home</button>
        {tabs.map((t) => <button role="tab" key={t} className="h-[23px] border-r border-[#aebfdb] px-[5px]">{t}</button>)}
        <button className="ml-2 flex items-center gap-[5px] text-[#b9c9e4]"><S w={10} h={14} vb="0 0 10 14"><path d="M3 10c0-2-2.500-2.500-2.500-5.500a4.500 4 0 0 1 9 0C9.500 7.500 7 8 7 10zM3 12h4M4 13.500h2" stroke="#fff" /></S>Tell me...</button>
        <button className="ml-auto">Jeremy M...</button>
        <button className="mr-4 ml-[10px] flex h-[23px] w-[63px] items-center justify-center gap-1 bg-[#124078]"><S w={15}><circle cx="8" cy="5" r="4" stroke="#fff" strokeWidth="1.500" /><path d="M1 15c0-4 3-6 6-6M9 12h7M12.500 9v7" stroke="#fff" strokeWidth="1.500" /></S>Share</button>
      </div>
    </header>
  );
}

function Ribbon() {
  return (
    <div className="flex h-[93px] shrink-0 border-b border-[#d2d2d2] bg-[#f1f1f1] text-[11px] text-[#444]">
      <Group name="Clipboard" w="w-[74px]" launch>
        <div className="flex h-full">
          <button className="flex w-[50px] flex-col items-center pt-[3px]">
            <S w={28} h={30} vb="0 0 28 30"><path d="M1 3h22v26H1z" fill="#ebc680" /><path d="M6 1h12v6H6z" fill="#777" /><path d="M14.500 12.500h8l5 5v12h-13zM22.500 12.500v5h5" fill="#fff" stroke="#666" /></S>
            <span className="mt-[2px]">Paste</span><S w={5} h={3} vb="0 0 7 4"><path d="M0 0h7L3.500 4z" fill="#666" /></S>
          </button>
          <div className="flex flex-col">
            <WB label="Cut"><S w={15}><path d="M4 1l6 9M12 1L6 10" stroke="#666" strokeWidth="2" /><circle cx="4" cy="12.500" r="2.500" stroke="#4472b4" strokeWidth="1.300" /><circle cx="12" cy="12.500" r="2.500" stroke="#4472b4" strokeWidth="1.300" /></S></WB>
            <WB label="Copy"><S w={15}><path d="M.5 2.500h6l2 2v8h-8zM6.500 5.500h6l3 3v7h-9z" fill="#fff" stroke="#666" /><path d="M2 5h3M2 8h3M2 10h3M8 9h5M8 11h5M8 13h5" stroke="#4472b4" /></S></WB>
            <WB label="Format painter"><S w={16}><path d="M1 8l7 7 3-5-4-4z" fill="#ebc680" /><path d="M8 5l4 5M11 7l4-5" stroke="#666" strokeWidth="3.500" /></S></WB>
          </div>
        </div>
      </Group>
      <Group name="Font" w="w-[196px] pl-1" launch>
        <WRow><WSelect label="Font name" value="Cambria (Body)" w="w-[143px]" /><WSelect label="Size" value="12" w="w-[43px]" /></WRow>
        <WRow>
          <WB label="Bold"><b className="text-[13px]">B</b></WB><WB label="Italic"><i className="font-[Liberation_Serif] text-[15px] font-bold">I</i></WB><WB label="Underline"><u className="text-[13px] font-bold">U</u></WB><WD />
          <WB label="Strikethrough" w="w-6"><s>abc</s></WB><WB label="Subscript"><b className="text-[12px]">x<sub className="text-[7px] text-[#4472b4]">2</sub></b></WB><WB label="Superscript"><b className="text-[12px]">x<sup className="text-[7px] text-[#4472b4]">2</sup></b></WB><WSep />
          <WB label="Clear formatting" w="w-8"><S w={16}><path d="M1 10L4.500 1 8 7M2.500 7h4" stroke="#666" strokeWidth="1.300" /><path d="M5 11l6-7 5 4-6 7-3 0z" fill="#e9879a" /></S></WB>
        </WRow>
        <WRow>
          <WB label="Text effects"><b className="text-[17px] text-[#f1f1f1] [-webkit-text-stroke:1px_#4a86c5]">A</b></WB><WD />
          <WB label="Highlight" w="w-6"><S w={17}><path d="M5 10l8-8 2 2-8 8z" fill="#666" /><path d="M1 12.500h15V16H1z" fill="#ff0" /><path d="M1 7c0-4 4-4 4 0v2M8 2v6" stroke="#555" /></S></WB><WD />
          <WB label="Font color" w="w-6"><span className="flex flex-col items-center text-[14px] leading-[13px] font-bold">A<span className="h-1 w-4 bg-[#f00]" /></span></WB><WD />
          <WB label="Change case" w="w-6"><span className="text-[13px]">Aa</span></WB><WD /><WSep />
          <WB label="Grow font"><span className="text-[14px]">A</span><S w={5} h={11} vb="0 0 5 11"><path d="M0 3h5L2.500 0z" fill="#4472b4" /></S></WB>
          <WB label="Shrink font"><span className="text-[12px]">A</span><S w={5} h={12} vb="0 0 5 12"><path d="M0 0h5L2.500 3z" fill="#4472b4" /></S></WB>
        </WRow>
      </Group>
      <Group name="Paragraph" w="w-[163px] pl-1" launch>
        <WRow>
          <WB label="Bullets"><S w={14} vb="0 0 14 14"><path d="M5 2h9M5 7h9M5 12h9" stroke="#666" /><path d="M0 1h2v2H0zM0 6h2v2H0zM0 11h2v2H0z" fill="#4472b4" /></S></WB><WD />
          <WB label="Numbering" w="w-[34px] gap-2" on><S w={14} vb="0 0 14 14"><path d="M5 2h9M5 7h9M5 12h9" stroke="#666" /><path d="M1.500 0v4M0 5.500h2v3H0M0 10h2v4H0" stroke="#4472b4" /></S><S w={5} h={3} vb="0 0 7 4"><path d="M0 0h7L3.500 4z" fill="#333" /></S></WB>
          <WB label="Multilevel list"><S w={16}><path d="M4 2h11M8 7h7M12 12h4" stroke="#666" /><path d="M1 0v4M5 6v3M9 11v4" stroke="#4472b4" strokeWidth="1.500" /></S></WB><WD /><WSep m="mx-[3px]" />
          <WB label="Decrease indent"><S><path d="M0 2h16M8 5h8M8 8h8M0 14h16M8 11h8" stroke="#666" /><path d="M7 8H1M4 5L1 8l3 3" stroke="#4472b4" strokeWidth="1.600" /></S></WB>
          <WB label="Increase indent"><S><path d="M0 2h16M8 5h8M8 8h8M0 14h16M8 11h8" stroke="#666" /><path d="M0 8h6M3 5l3 3-3 3" stroke="#4472b4" strokeWidth="1.600" /></S></WB>
        </WRow>
        <WRow>
          <WB label="Align left" on><Lines d="M0 1.500h14M0 4.500h9M0 7.500h14M0 10.500h9" /></WB><WB label="Center"><Lines d="M0 1.500h14M2 4.500h10M0 7.500h14M2 10.500h10" /></WB><WB label="Align right"><Lines d="M0 1.500h14M5 4.500h9M0 7.500h14M5 10.500h9" /></WB><WB label="Justify"><Lines d="M0 1.500h14M0 4.500h14M0 7.500h14M0 10.500h14" /></WB>
          <WSep m="mx-1" /><WB label="Line spacing"><S><path d="M7 3h8M7 6h8M7 9h8M7 12h8" stroke="#666" /><path d="M3 1v14M1 3.500L3 1l2 2.500M1 12.500L3 15l2-2.500" stroke="#4472b4" strokeWidth="1.400" /></S></WB><WD />
        </WRow>
        <WRow>
          <WB label="Shading"><S w={17}><path d="M3 6l6-4 4 4-6 5zM6 1v5" fill="#fff" stroke="#666" strokeWidth="1.200" /><path d="M13 5c3 2 3 5 1 6z" fill="#4472b4" /><path d="M1.500 12.500h13v3h-13z" fill="#fff" stroke="#777" /></S></WB><WD />
          <WB label="Borders" w="w-6"><S w={13} vb="0 0 13 13"><path d="M.5 0v12M6.500 0v12M12.500 0v12M0 .5h13M0 6.500h13" stroke="#777" strokeDasharray="1 1" /><path d="M0 12.500h13" stroke="#333" /></S></WB><WD /><WSep m="mx-1" />
          <WB label="Sort" w="w-6"><S w={15}><path d="M1 7L4 0l3 7M2 5h4" stroke="#4472b4" strokeWidth="1.300" /><path d="M1.500 9.500h5l-5 6h5" stroke="#8a4fb0" strokeWidth="1.300" /><path d="M12 1v13M9.500 11.500L12 14l2.500-2.500" stroke="#666" strokeWidth="1.300" /></S></WB><WSep />
          <WB label="Show marks" w="w-6"><span className="text-[16px]">¶</span></WB>
        </WRow>
      </Group>
      <Group name="Styles" w="w-[246px] px-[5px]" launch>
        <div className="mt-[2px] flex h-[60px] border border-[#ababab] bg-white">
          <Style sample="AaBbCcDd" name="¶ Abstract" size="text-[13px]" /><Style sample="AaBbCcI" name="¶ Author" size="text-[16px]" /><Style sample="AaBbCcI" name="¶ Bibliogr..." size="text-[16px]" />
          <div className="flex w-[15px] flex-col border-l border-[#ababab]">
            <button aria-label="Previous styles" className="flex flex-1 rotate-180 items-center justify-center bg-[#e1e1e1]"><S w={5} h={3} vb="0 0 7 4"><path d="M0 0h7L3.500 4z" fill="#aaa" /></S></button>
            <button aria-label="Next styles" className="flex flex-1 items-center justify-center border-y border-[#ababab]"><S w={5} h={3} vb="0 0 7 4"><path d="M0 0h7L3.500 4z" fill="#666" /></S></button>
            <button aria-label="All styles" className="flex flex-1 flex-col items-center justify-center gap-[2px]"><span className="h-px w-[7px] bg-[#666]" /><S w={5} h={3} vb="0 0 7 4"><path d="M0 0h7L3.500 4z" fill="#666" /></S></button>
          </div>
        </div>
      </Group>
      <Group name="" w="w-11">
        <button className="flex w-full flex-col items-center">
          <span className="flex h-[30px] w-[30px] items-center justify-center border border-[#d0d0d0] bg-[#fbfbfb]"><S w={15}><circle cx="10" cy="6" r="4.500" stroke="#4472b4" strokeWidth="1.600" /><path d="M6.500 9.500L1 15" stroke="#4472b4" strokeWidth="2.400" /></S></span>
          <span className="mt-[5px]">Editing</span><span className="mt-1"><S w={5} h={3} vb="0 0 7 4"><path d="M0 0h7L3.500 4z" fill="#666" /></S></span>
        </button>
      </Group>
      <button aria-label="Collapse ribbon" className="mr-[11px] mb-1 ml-auto rotate-180 self-end"><Chevron c="#555" /></button>
    </div>
  );
}

/* ruler tick marks: every eighth of an inch, longer at the half, a number at each inch */
const INCH = 106;
const marks = (from, to) => {
  const out = [];
  for (let k = from; k <= to; k++) if (k % 8 !== 0) out.push(k);
  return out;
};

function HRuler() {
  return (
    <div className="flex h-6 shrink-0 items-start bg-[#e6e6e6]">
      <span className="mt-1 ml-1 flex h-[14px] w-[15px] items-center justify-center border border-[#d0d0d0] bg-[#f1f1f1]"><span className="h-[5px] w-[5px] border-b-2 border-l-2 border-[#777]" /></span>
      <svg className="ml-1 h-[24px] w-[734px] overflow-visible" viewBox="0 0 734 24" aria-hidden="true">
        <rect y="5" width="734" height="10" fill="#fff" /><rect y="5" width="25" height="10" fill="#c6c6c6" /><rect x="713" y="5" width="20" height="10" fill="#c6c6c6" />
        {marks(-1, 54).map((k) => (
          <rect key={k} x={Math.round(25 + (k * INCH) / 8)} y={k % 4 === 0 ? 8 : 10} width="1" height={k % 4 === 0 ? 5 : 2} fill="#555" />
        ))}
        {[1, 2, 3, 4, 5, 6].map((n) => <text key={n} x={25 + n * INCH} y="14" fontSize="10" textAnchor="middle" fontFamily="Open Sans" fill="#444">{n}</text>)}
        <path d="M20.500 2.500h8v3l-4 4-4-4z" fill="#fff" stroke="#888" /><path d="M46.500 17.500v-3l4-4 4 4v3zM46.500 17.500h8v5h-8z" fill="#fff" stroke="#888" />
        <path d="M709.500 17.500v-3l4-4 4 4v3z" fill="#fff" stroke="#888" />
      </svg>
    </div>
  );
}
function VRuler() {
  return (
    <svg className="mr-2 ml-[5px] h-full w-[11px] shrink-0 overflow-visible" viewBox="0 0 11 937" preserveAspectRatio="xMidYMin meet" aria-hidden="true">
      <rect width="11" height="937" fill="#fff" /><rect width="11" height="57" fill="#c6c6c6" />
      {marks(-4, 66).map((k) => (
        <rect key={k} x={k % 4 === 0 ? 3 : 5} y={Math.round(57 + (k * INCH) / 8)} width={k % 4 === 0 ? 5 : 2} height="1" fill="#555" />
      ))}
      {[1, 2, 3, 4, 5, 6, 7, 8].map((n) => <text key={n} transform={"translate(9 " + (57 + n * INCH) + ") rotate(-90)"} fontSize="10" textAnchor="middle" fontFamily="Open Sans" fill="#444">{n}</text>)}
    </svg>
  );
}

const W = ({ children }) => <span className="underline decoration-[#f00] decoration-wavy decoration-1 underline-offset-2 [text-decoration-skip-ink:none]">{children}</span>;
const H = ({ children }) => <h3 className="mt-[3px] mb-px font-[Lato] text-[22px] leading-[25px] font-bold text-[#4f81bd]">{children}</h3>;
const Li = ({ n, children }) => <div className="flex"><span className="w-[27px] shrink-0">{n}.</span><p>{children}</p></div>;
const M = ({ children }) => <span className="font-[DejaVu_Sans_Mono] text-[15px] leading-none">{children}</span>;
const Br = () => <br />;

function Document() {
  return (
    <article className="relative flex min-w-0 flex-1 flex-col gap-[13px] bg-white pt-[57px] pl-6 font-[Liberation_Serif] text-[18px] leading-[21px] whitespace-pre text-black">
      <Li n="5">Close ArcMap and do not save.</Li>
      <H><W>Reproject</W> the Data</H>
      <p>
        View the <W>del_elev</W> and <W>del_land</W> grids in <W>ArcCatalog</W>.  They are clearly different shapes<Br />
        because they are in different CRSs, as you can confirm by going to the Layer Properties of<Br />
        each.  Here, we will <W>reproject</W> all three data sets (the <W>del_elev</W> and <W>del_land</W> grids, and the<Br />
        <W>del_cnty</W> <W>shapefile</W>) into UTM.
      </p>
      <Li n="1">In <W>ArCatalog</W>, <W>reproject</W> the <W>del_cnty</W> <W>shapefile</W> into NAD_1983_UTM_Zone 18N.</Li>
      <Li n="2"><W>Reproject</W> for raster data uses a different tool.  Go to <W>ArcToolbox→Data</W> Management<Br /><W>Tools→Projections</W> and <W>Transformations→Raster→Project</W> Raster.</Li>
      <Li n="3">The tool dialog box is similar to the vector Project tool.  Convert both the <W>del_elev</W> and<Br />the <W>del_land</W> <W>rasters</W> to NAD_1983_UTM_Zone 18N.  Name the new grids <W>del_elev_utm</W><Br />and <W>del_land_utm</W>, respectively.</Li>
      <H>Visualizing Terrain using <W>Hillshade</W></H>
      <p>
        A <W>hillshade</W> is a grid that encodes a hypothetical reflectance value off an elevation surface<Br />
        given the position of a virtual light source. It allows for the visual representation of the<Br />
        terrain as though you were viewing the surface from an airplane.
      </p>
      <Li n="1">Open ArcMap and add the <W>del_elev_utm</W> grid.</Li>
      <Li n="2">To create a <W>hillshade</W> grid, go to <W>ArcToolbox→Spatial</W> Analyst <W>Tools→Surface→Hillshade.</W><Br />For Input raster choose <W>del_elev_utm</W>.  Name the output hill_1.  Leave the other defaults<Br />and click OK.</Li>
      <Li n="3">Add the resulting data to the map. Add the <M>rivers</M> <W>shapefile</W> to help you to interpret the<Br /><W>hillshade</W>. The rivers should appear to be in “valleys” suggested by the visual display of<Br />the <W>hillshade</W>.</Li>
      <p>
        You might note the four craters in near the western border of the Council Rock School<Br />
        District. Can you guess what they are? You can search for <M>"Council Rock School</M><Br />
        <M>District"</M> in Google Earth or the satellite view of Google Maps. Zoom out until you see the<Br />
        areas that correspond with the craters in your map.
      </p>
      <div className="absolute right-[18px] bottom-[9px] font-[Open_Sans] text-[#c0c0c0]"><p className="text-[19px] leading-[25px]">Activate Windows</p><p className="text-[14px] leading-[20px]">Go to Settings to activate Windows.</p></div>
    </article>
  );
}

function Word() {
  return (
    <section aria-label="Word" className="flex min-w-0 flex-[777] flex-col overflow-hidden border border-r-[3px] border-[#8a8a8a] border-b-2 bg-[#e6e6e6]">
      <WordHeader />
      <Ribbon />
      <HRuler />
      <div className="flex min-h-0 flex-1 pr-[18px] pb-4"><VRuler /><Document /></div>
      <footer className="flex h-[21px] shrink-0 items-center border-t border-[#c6c6c6] bg-[#f1f1f1] pl-[6px] text-[11px] text-[#444]">
        <span className="w-[88px]">Page 10 of 17</span><span>16 of 2348 words</span>
        <button aria-label="Proofing" className="ml-5"><S w={15}><path d="M7.500 3v11M7.500 3C5 1 3 2 1.500 2v10c2 0 4 0 6 2M7.500 14l2-1M8 3c2-1 4-1 6-1v3M10 7l5 5M15 7l-5 5" stroke="#666" /></S></button>
        <button aria-label="Read mode" className="mr-3 ml-auto"><S w={14}><path d="M8 3v11M8 3C6 1 3 2 1.500 2v11c2 0 4 0 6.500 1 2-1 4-1 6.500-1V2C12 2 10 1 8 3M3 5h3M3 8h3M3 10.500h3M10 5h3M10 8h3M10 10.500h3" stroke="#666" /></S></button>
        <button aria-label="Print layout" className="flex h-5 w-[38px] items-center justify-center bg-[#cacaca]"><S w={14}><path d="M1.500 1.500h13v13h-13zM4 4.500h8M4 7h8M4 9.500h8M4 12h8" stroke="#555" /></S></button>
        <button aria-label="Web layout" className="mr-4 ml-3"><S w={14}><path d="M8 14.500H1.500v-13h11V7M4 4.500h6M4 7h5M4 9.500h3" stroke="#666" /><circle cx="11.500" cy="11.500" r="3.500" fill="#999" stroke="#666" /></S></button>
        <button aria-label="Zoom out" className="h-[2px] w-[6px] bg-[#555]" />
        <input aria-label="Zoom" type="range" min="10" max="210" defaultValue="112" className="mx-1 h-[15px] w-[100px] appearance-none bg-[linear-gradient(#999,#999)] bg-[length:100%_1px] bg-center bg-no-repeat [&::-webkit-slider-thumb]:h-[13px] [&::-webkit-slider-thumb]:w-[4px] [&::-webkit-slider-thumb]:appearance-none [&::-webkit-slider-thumb]:bg-[#555]" />
        <button aria-label="Zoom in"><S w={8} vb="0 0 8 8"><path d="M0 4h8M4 0v8" stroke="#555" strokeWidth="2" /></S></button>
        <span className="mr-[19px] ml-4">110%</span>
      </footer>
    </section>
  );
}

/* ---------- desktop ---------- */
function Wallpaper() {
  return (
    <div className="relative w-[45px] shrink-0 overflow-hidden">
      <svg className="absolute inset-0 h-full w-full" viewBox="105 0 135 1515" preserveAspectRatio="none" aria-hidden="true">
        <path d="M105 0h135v1515H105z" fill="#490004" />
        <path d="M105 0h135v160l-135 22z" fill="#5d000a" /><path d="M105 32l82-3-60 95-22 4z" fill="#9a0624" />
        <path d="M105 180l135-22v100l-135 56z" fill="#e9122f" /><path d="M105 314l135-56v94l-135 17z" fill="#730010" /><path d="M105 306l50-8 85-40v28l-135 28z" fill="#8f0a14" />
        <path d="M105 410l60 108h-60z" fill="#300002" /><path d="M105 597l135-7v76H105z" fill="#5d0009" /><path d="M105 666h135v76H105z" fill="#380001" /><path d="M105 742h135v50l-135-4z" fill="#9a0624" />
        <path d="M240 920v63l-90-10z" fill="#940422" /><path d="M105 1045l85-70-85 0z" fill="#68000e" /><path d="M155 1050l70-67h15v75z" fill="#e9122f" /><path d="M105 1045l135 15v15H105z" fill="#5c0016" />
        <path d="M105 1222h135v293H105z" fill="#8b0620" /><path d="M150 1268l90-22v38z" fill="#e9122f" /><path d="M105 1262l50 8-50 14z" fill="#5c0016" /><path d="M105 1333l135 18v68l-135-38z" fill="#460003" />
      </svg>
      <div className="absolute inset-x-0 top-[823px] flex h-[112px] flex-col overflow-hidden bg-black pt-2 leading-none whitespace-nowrap text-white">
        <span className="-ml-[12px] font-[Liberation_Serif] text-[44px] leading-[44px]">PLE</span>
        <span className="ml-1 font-[Lato] text-[17px] leading-[20px]">S&nbsp; I T</span>
        <span className="mt-[10px] -ml-[2px] font-[Open_Sans] text-[15px] font-bold">rts</span>
      </div>
    </div>
  );
}

const Task = ({ label, open, on, children }) => (
  <button aria-label={label} className={"relative flex h-full w-[49px] items-center justify-center" + (on ? " bg-[#3a3a3a]" : "")}>
    {children}
    {open && <span className="absolute inset-x-1 bottom-0 h-[2px] bg-[#76b9ed]" />}
  </button>
);
const Tray = ({ label, children }) => <button aria-label={label} className="flex w-6 justify-center"><S>{children}</S></button>;

function Taskbar() {
  return (
    <footer className="flex h-10 shrink-0 items-center bg-linear-to-r from-black via-[#050001] to-[#190004] text-white">
      <Task label="Start"><S><path d="M0 2.500l6.500-1v6H0zM7.500 1.300L16 0v7.500H7.500zM0 8.500h6.500v6L0 13.500zM7.500 8.500H16V16l-8.500-1.300z" fill="#fff" /></S></Task>
      <Task label="Task view"><S w={20} h={16} vb="0 0 20 16"><path d="M4.500 2.500h11v11h-11zM2.500 3.500h-2v9h2M17.500 3.500h2v9h-2" stroke="#fff" /></S></Task>
      <Task label="Edge"><S w={21} vb="0 0 20 20"><path d="M1 9C2 3 6 0 10.500 0 16 0 19 4 19 8.500V11H7c.2 3 2.500 4.500 5.500 4.500 2 0 3.800-.5 5.500-1.500v4.200C16.300 19.300 14 20 11.500 20 6.500 20 3 17 3 12.500 3 9.500 4.500 7.500 7 6 4.500 6.300 2.300 7.500 1 9zm6.200-1H13c0-2.500-1-3.500-2.800-3.500S7.500 6 7.200 8z" fill="#0078d7" /></S></Task>
      <Task label="File Explorer" open><S w={23} vb="0 0 22 20"><path d="M0 1h8l2 3h12v15H0z" fill="#f8d775" /><path d="M0 6h22v13H0z" fill="#fbe49b" /><path d="M4 19v-8h14v8h-4v-4H8v4z" fill="#46a9e0" /></S></Task>
      <Task label="Store"><S w={23} h={25} vb="0 0 22 24"><path d="M0 6h22v18H0z" fill="#fff" /><path d="M7 6c0-6 8-6 8 0" stroke="#fff" strokeWidth="1.500" /><path d="M6 9h4.500v5H6z" fill="#f25022" /><path d="M11.500 9H16v5h-4.500z" fill="#7fba00" /><path d="M6 15h4.500v5H6z" fill="#00a4ef" /><path d="M11.500 15H16v5h-4.500z" fill="#ffb900" /></S></Task>
      <Task label="Chrome" open><S w={23} vb="0 0 24 24"><circle cx="12" cy="12" r="12" fill="#fcc934" /><path d="M12 12L1.600 6A12 12 0 0 0 12 24l5-9z" fill="#1e9e52" /><path d="M1.600 6A12 12 0 0 1 22.400 6.500H12L7 14z" fill="#e33b2e" /><circle cx="12" cy="12" r="5.500" fill="#fff" /><circle cx="12" cy="12" r="4.300" fill="#4a87ee" /></S></Task>
      <Task label="Word" open><S w={23} vb="0 0 22 22"><path d="M11 3h10v16H11z" fill="#fff" stroke="#2b579a" /><path d="M13 6h6M13 9h6M13 12h6M13 15h6" stroke="#2b579a" strokeWidth="1.300" /><path d="M0 2l13-2v22L0 20z" fill="#2b579a" /><path d="M2.500 7l2 8 2-7 2 7 2-8" stroke="#fff" strokeWidth="1.500" /></S></Task>
      <Task label="ArcCatalog" open><S w={25} vb="0 0 24 24"><path d="M12 2l6-2 5 3v15l-6 4-5-3z" fill="#e4c12a" stroke="#8a6f00" strokeWidth=".7" /><path d="M17 4l6-1v15l-6 4z" fill="#b08d10" /><path d="M13 5l3 1v4l-3-1zM13 11l3 1v4l-3-1z" stroke="#8a6f00" strokeWidth=".7" /><path d="M1 17l7-2 5 3-1 5-8 1z" fill="#f0d457" stroke="#8a6f00" strokeWidth=".7" /><circle cx="8.500" cy="14" r="4.500" fill="#3579c4" /><path d="M6 13c2-3 4-2 3 1s-3 1-3-1z" fill="#4fae46" /><path d="M1 18l7 1 4-1v5l-8 1z" fill="#e4c12a" /></S></Task>
      <Task label="ArcMap" open on><ArcGlobe w={24} /></Task>
      <div className="ml-auto flex items-center">
        <Tray label="Meeting"><circle cx="8" cy="8" r="7" fill="#f68d2e" /><circle cx="8" cy="8" r="7" stroke="#f6b26b" strokeWidth="1.500" strokeDasharray="3 2" /><circle cx="8" cy="8" r="3.500" stroke="#fff" strokeWidth="2.500" strokeDasharray="2.200 1.400" /></Tray>
        <Tray label="Antivirus"><path d="M1 2c3 0 5-1 7-2 2 1 4 2 7 2 0 7-2 11-7 14C3 13 1 9 1 2z" fill="#e4251b" /><path d="M5.500 4.500l5 6M10.500 4.500l-5 6" stroke="#fff" strokeWidth="1.600" /></Tray>
        <Tray label="Security"><path d="M1 3l5-1 2 4" stroke="#f0612e" strokeWidth="2.500" /><path d="M8 3l6-1-2 5" stroke="#3fae49" strokeWidth="2.500" /><path d="M2 5l6 10 5-8" stroke="#4a86d8" strokeWidth="2" /></Tray>
        <Tray label="USB"><path d="M5.500 1.500h5v4h-5zM4.500 5.500h7v9h-7z" stroke="#ddd" /><path d="M9 12l2 3 4-5" stroke="#ddd" strokeWidth="1.400" /></Tray>
        <Tray label="Globe">{I.globe}</Tray>
        <Tray label="OneDrive"><path d="M3 13a3 3 0 0 1 0-6 4 4 0 0 1 7-2 4 4 0 0 1 5 4 2.500 2.500 0 0 1-1 4z" fill="#8c8c8c" /></Tray>
        <Tray label="Defender"><path d="M1 2c3 0 5-1 7-2 2 1 4 2 7 2 0 7-2 11-7 14C3 13 1 9 1 2z" fill="#fff" /><path d="M8 0v15M1 7h14" stroke="#111" strokeWidth="1.200" /><path d="M11 8l5 8H6z" fill="#f7b500" /><path d="M11 11v2.500M11 14.500v1" stroke="#111" /></Tray>
        <Tray label="License"><path d="M2 1l4 1v11l-4-2zM7 1l4 1v11l-4-2z" fill="#f2cf68" stroke="#b98a1c" strokeWidth=".8" /><circle cx="11" cy="12" r="3.700" fill="#ffe600" /><path d="M11 10v2.500" stroke="#333" /></Tray>
        <Tray label="Network"><path d="M5.500 3.500h10v7h-10zM10 11v3M7 14.500h6M1.500 2.500h4v4h-4zM3.500 6.500v8h3" stroke="#fff" /></Tray>
        <Tray label="Volume"><path d="M.5 6v4h2.500l4 3.500v-11L3 6zM9 6c1 1 1 3 0 4M11 4c2 2 2 6 0 8M13 2c3 3 3 9 0 12" stroke="#fff" /></Tray>
      </div>
      <time className="ml-[7px] w-[52px] text-center text-[11px] leading-[18px]">8:50 AM<br />6/25/2018</time>
      <button aria-label="Notifications" className="mr-[18px] ml-[18px]"><S w={18} h={17} vb="0 0 16 15"><path d="M1 1h14v10h-5l-2 2.500L6 11H1z" stroke="#fff" /></S></button>
      <span className="mr-1 h-full w-px bg-[#4a4044]" />
    </footer>
  );
}

export default function App() {
  return (
    <main className="flex h-screen w-full flex-col overflow-hidden bg-black font-['Open_Sans',sans-serif]">
      <svg width="0" height="0" className="absolute" aria-hidden="true"><defs><linearGradient id="rg" x2="1" y2="1"><stop offset="0" stopColor="#fff" /><stop offset="1" stopColor="#ddd" /></linearGradient></defs></svg>
      <div className="flex min-h-0 flex-1">
        <div className="w-2 shrink-0 overflow-hidden pt-[163px] pl-px text-[11px] leading-4 text-white"><p className="mb-[88px]">2</p><p>2</p></div>
        <div className="mb-[6px] flex min-w-0 flex-1"><ArcMap /><Word /></div>
        <Wallpaper />
      </div>
      <Taskbar />
    </main>
  );
}
